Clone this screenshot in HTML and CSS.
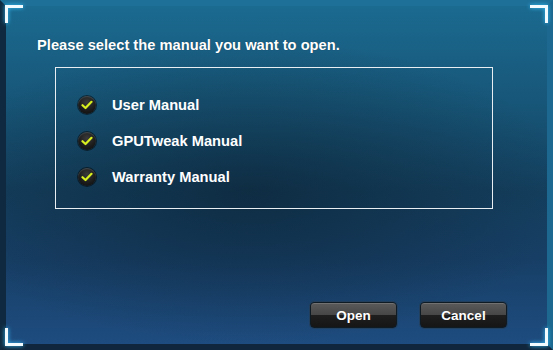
FILE: index.html
```html
<!DOCTYPE html>
<html>
<head>
<meta charset="utf-8">
<link rel="stylesheet" href="styles.css">
</head>
<body>
<div class="window">
  <div class="panel">
    <p class="prompt">Please select the manual you want to open.</p>
    <div class="list">
      <div class="item"><span class="check"><svg width="12" height="10" viewBox="0 0 12 10"><path d="M1.5 5.2 L4.5 8 L10.5 1.8" fill="none" stroke="#d8f020" stroke-width="2.2" stroke-linecap="round" stroke-linejoin="round"/></svg></span><span class="label">User Manual</span></div>
      <div class="item"><span class="check"><svg width="12" height="10" viewBox="0 0 12 10"><path d="M1.5 5.2 L4.5 8 L10.5 1.8" fill="none" stroke="#d8f020" stroke-width="2.2" stroke-linecap="round" stroke-linejoin="round"/></svg></span><span class="label">GPUTweak Manual</span></div>
      <div class="item"><span class="check"><svg width="12" height="10" viewBox="0 0 12 10"><path d="M1.5 5.2 L4.5 8 L10.5 1.8" fill="none" stroke="#d8f020" stroke-width="2.2" stroke-linecap="round" stroke-linejoin="round"/></svg></span><span class="label">Warranty Manual</span></div>
    </div>
    <div class="actions">
      <button class="btn">Open</button>
      <button class="btn">Cancel</button>
    </div>
  </div>
  <span class="corner tl"></span>
  <span class="corner tr"></span>
  <span class="corner bl"></span>
  <span class="corner br"></span>
</div>
</body>
</html>
```
FILE: styles.css
```css
html, body {
  margin: 0;
  padding: 0;
  background: #0f2a40;
}
.window {
  position: relative;
  width: 553px;
  height: 350px;
  box-sizing: border-box;
  border-style: solid;
  border-width: 6px 6px 6px 6px;
  border-color: #1e7098 #1c6890 #10263c #0f2a40;
  font-family: "Liberation Sans", Arial, sans-serif;
  color: #fff;
}
.panel {
  height: 100%;
  box-sizing: border-box;
  padding: 31px 40px 0 31px;
  display: flex;
  flex-direction: column;
  background:
    radial-gradient(ellipse 60% 45% at 45% 55%, rgba(10,30,45,0.55), rgba(10,30,45,0) 100%),
    linear-gradient(180deg, #1b6a90 0%, #175577 30%, #143f5e 55%, #173f66 75%, #1e4c80 100%);
}
.prompt {
  margin: 0;
  font-weight: bold;
  font-size: 14.7px;
  line-height: 17px;
  text-shadow: 0 0 1px rgba(0,0,0,0.4);
}
.list {
  margin: 13px 0 0 18px;
  width: 438px;
  height: 142px;
  box-sizing: border-box;
  border: 1px solid #e8eef2;
  padding: 27px 0 0 22px;
  display: flex;
  flex-direction: column;
  gap: 17px;
}
.item {
  display: flex;
  align-items: center;
  height: 19px;
  gap: 16px;
}
.check {
  width: 18px;
  height: 18px;
  border-radius: 50%;
  background: radial-gradient(circle at 50% 35%, #3a3a3a 0%, #1a1a1a 60%, #0c0c0c 100%);
  box-shadow: 0 0 0 1px rgba(0,0,0,0.5), inset 0 1px 1px rgba(255,255,255,0.15);
  display: flex;
  align-items: center;
  justify-content: center;
}
.label {
  font-weight: bold;
  font-size: 14.7px;
}
.actions {
  margin-top: auto;
  margin-bottom: 16px;
  display: flex;
  justify-content: flex-end;
  gap: 23px;
}
.btn {
  width: 87px;
  height: 26px;
  box-sizing: border-box;
  border: 1px solid #0e1a24;
  border-radius: 4px;
  background: linear-gradient(180deg, #5a5a5a 0%, #474747 48%, #1e1e1e 52%, #161616 100%);
  box-shadow: 0 0 0 1px rgba(40,60,80,0.6), inset 0 1px 0 rgba(255,255,255,0.15);
  color: #fff;
  font-family: "Liberation Sans", Arial, sans-serif;
  font-weight: bold;
  font-size: 13.5px;
  padding: 0;
}
.corner {
  position: absolute;
  width: 15px;
  height: 15px;
  border-color: #f2fbff;
  border-style: solid;
  filter: drop-shadow(0 0 2px #36c4ff);
}
.tl { top: -1px; left: -1px; border-width: 3px 0 0 3px; }
.tr { top: -1px; right: -1px; border-width: 3px 3px 0 0; }
.bl { bottom: -2px; left: -1px; border-width: 0 0 3px 3px; }
.br { bottom: -2px; right: -1px; border-width: 0 3px 3px 0; }
```
